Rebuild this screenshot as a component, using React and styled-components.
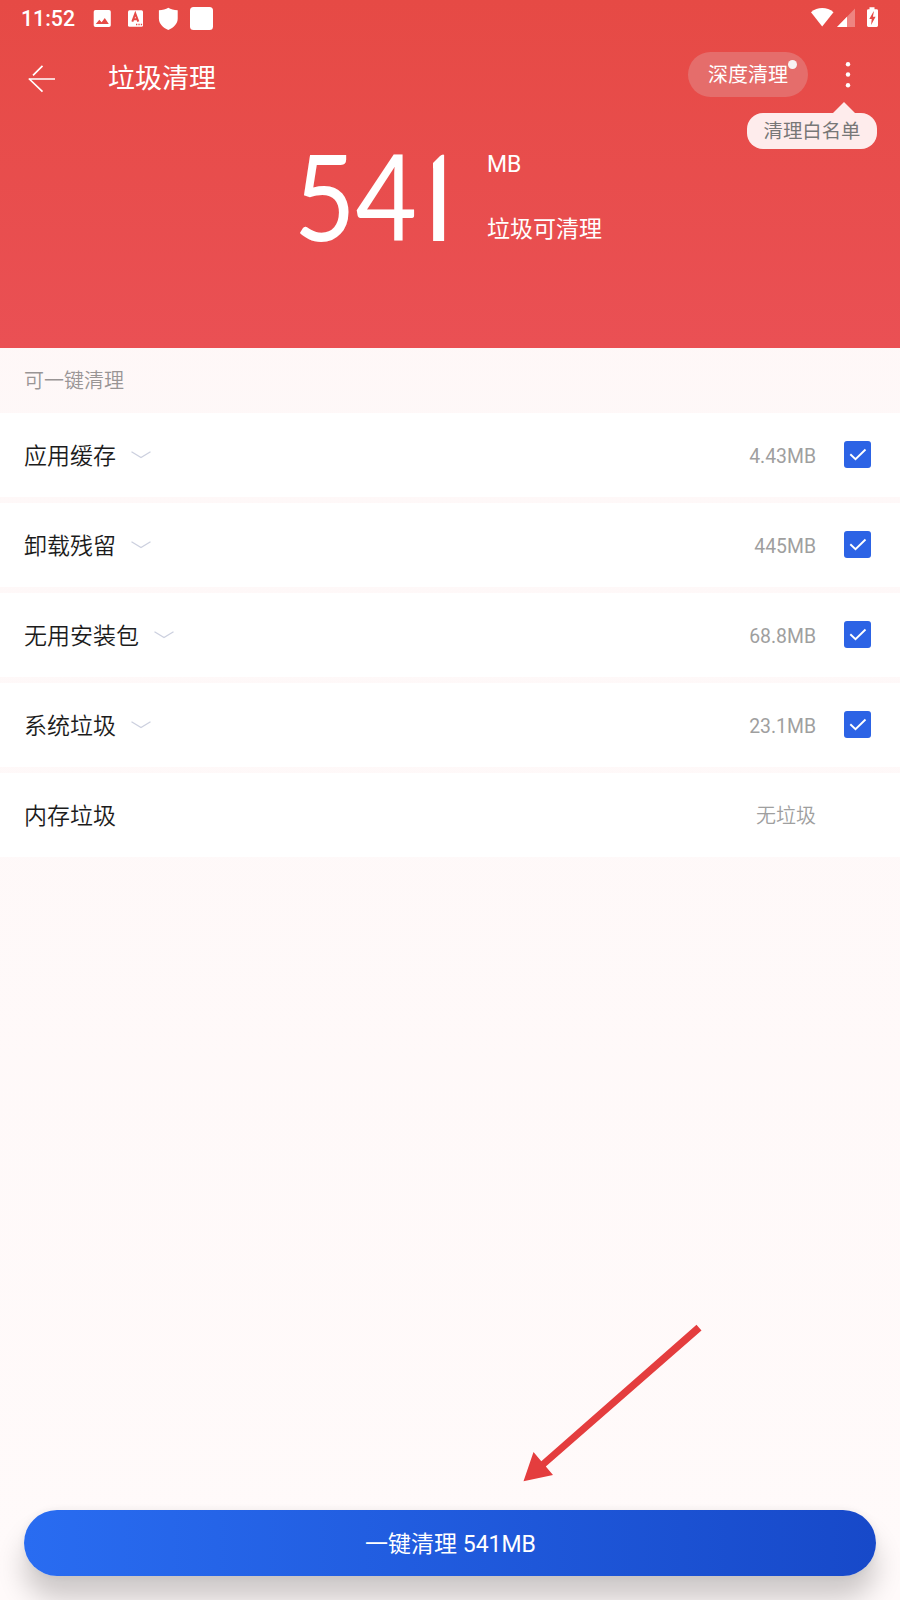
import React, { useState } from "react";
import styled, { createGlobalStyle } from "styled-components";

const groups = [
  { id: "cache", name: "应用缓存", size: "4.43MB" },
  { id: "residue", name: "卸载残留", size: "445MB" },
  { id: "apk", name: "无用安装包", size: "68.8MB" },
  { id: "system", name: "系统垃圾", size: "23.1MB" },
  { id: "memory", name: "内存垃圾", size: null },
];

const StatusBar = () => (
  <StatusRow>
    <Clock>11:52</Clock>
    <svg width="140" height="36" viewBox="0 0 140 36" fill="#fff">
      <path
        fillRule="evenodd"
        d="M3.500 10H17a1.800 1.800 0 0 1 1.800 1.800v13.400A1.800 1.800 0 0 1 17 27H3.500a1.800 1.800 0 0 1-1.800-1.800V11.800A1.800 1.800 0 0 1 3.500 10zM3.800 24h13l-4-6-3.200 4.200-2.300-2.400z"
      />
      <rect x="36" y="10.300" width="15" height="16.400" rx="1.500" />
      <path
        d="M40.300 21.700l3-8 3 8M41.300 19.300h4"
        fill="none"
        stroke="#e64a46"
        strokeWidth="2"
      />
      <path d="M44 24.500h6.500" stroke="#e64a46" strokeWidth="1.300" strokeDasharray="1.300 1.100" />
      <path d="M76.300 7.700c2.400 1.600 5.700 2.400 9.400 2.500v8.300c0 5.300-4 9.200-9.400 11.500-5.400-2.300-9.400-6.200-9.400-11.500v-8.300c3.700-.1 7-.9 9.400-2.500z" />
      <rect x="98" y="7" width="23" height="23" rx="3.500" />
    </svg>
    <Spacer />
    <svg width="72" height="36" viewBox="0 0 72 36" fill="#fff">
      <path d="M3 12.200C9.500 6.700 19 6.700 25.500 12.200L14.200 26.500z" />
      <path d="M47 8.500V27H29z" opacity="0.32" />
      <path d="M39 16.700V27H29z" />
      <path
        fillRule="evenodd"
        d="M61.500 7.200h5v2h2.100a1.400 1.400 0 0 1 1.400 1.400v15a1.400 1.400 0 0 1-1.400 1.400h-8.200a1.400 1.400 0 0 1-1.400-1.400v-15a1.400 1.400 0 0 1 1.400-1.400h1.100zM65.500 11.500l-4.200 7.500h2.400l-.6 6 4.500-8.200h-2.700l1-5.300z"
      />
    </svg>
  </StatusRow>
);

const Group = ({ name, size, checked, onToggle }) => (
  <Row>
    <RowName>{name}</RowName>
    {size && (
      <Chevron width="20" height="8" viewBox="0 0 20 8">
        <path d="M.5 .8 10 6.500l9.500-5.700" fill="none" stroke="#ccd0df" strokeWidth="1.300" />
      </Chevron>
    )}
    <Spacer />
    {size ? <RowSize>{size}</RowSize> : <RowEmpty>无垃圾</RowEmpty>}
    <CheckSlot>
      {size && (
        <Checkbox role="checkbox" aria-checked={checked} $checked={checked} onClick={onToggle}>
          {checked && (
            <svg width="27" height="27" viewBox="0 0 27 27">
              <path d="M6.300 13.300l5.200 5L21.500 8.500" fill="none" stroke="#fff" strokeWidth="1.900" />
            </svg>
          )}
        </Checkbox>
      )}
    </CheckSlot>
  </Row>
);

const App = () => {
  const [unchecked, setUnchecked] = useState([]);

  const toggle = (id) => {
    setUnchecked((list) => (list.includes(id) ? list.filter((i) => i !== id) : [...list, id]));
  };

  return (
    <Screen>
      <GlobalStyle />
      <Header>
        <StatusBar />
        <AppBar>
          <BackIcon width="28" height="28" viewBox="0 0 28 28">
            <path
              d="M14.500 .8 5 10.300M27 14H1.500M.8 13.500l13.700 13.200"
              fill="none"
              stroke="#fff"
              strokeWidth="1.700"
            />
          </BackIcon>
          <Title>垃圾清理</Title>
          <Spacer />
          <DeepClean>
            深度清理
            <Dot />
          </DeepClean>
          <MenuButton>
            <svg width="6" height="28" viewBox="0 0 6 28" fill="#fff">
              <circle cx="3" cy="3.200" r="2.200" />
              <circle cx="3" cy="13.500" r="2.200" />
              <circle cx="3" cy="24.200" r="2.200" />
            </svg>
            <Tip>清理白名单</Tip>
          </MenuButton>
        </AppBar>
        <Summary>
          <Total>
            <Digits>54</Digits>
            <One>1</One>
          </Total>
          <Units>
            <Unit>MB</Unit>
            <span>垃圾可清理</span>
          </Units>
        </Summary>
      </Header>
      <SectionTitle>可一键清理</SectionTitle>
      <List>
        {groups.map((g) => (
          <Group
            key={g.id}
            name={g.name}
            size={g.size}
            checked={!unchecked.includes(g.id)}
            onToggle={() => toggle(g.id)}
          />
        ))}
      </List>
      <Footer>
        <Pointer width="180" height="158" viewBox="0 0 180 158" fill="#e43d3e">
          <path d="M173.500 .8l5 5.800L22.800 142.500l7.200 8.600L.5 157.300l10-29.400 7.800 9.400z" />
        </Pointer>
        <CleanButton>一键清理 541MB</CleanButton>
      </Footer>
    </Screen>
  );
};

export default App;

const GlobalStyle = createGlobalStyle`
  body {
    margin: 0;
    background: #fff9f9;
  }
`;

const Screen = styled.div`
  width: 900px;
  height: 1600px;
  display: flex;
  flex-direction: column;
  overflow: hidden;
  background: linear-gradient(#fef7f7, #fffafa);
  font-family: Roboto, "Noto Sans CJK SC", sans-serif;
  color: #1c1c1c;
`;

const Spacer = styled.div`
  flex: 1;
`;

const Header = styled.header`
  height: 348px;
  flex-shrink: 0;
  background: linear-gradient(#e64a45, #ea5054);
  color: #fff;
`;

const StatusRow = styled.div`
  height: 36px;
  display: flex;
  align-items: center;
  padding: 0 20px 0 21px;
`;

const Clock = styled.span`
  width: 71px;
  padding-top: 1px;
  font-size: 21.300px;
  font-weight: 500;
  line-height: 36px;
`;

const AppBar = styled.div`
  height: 77px;
  display: flex;
  align-items: center;
  padding: 0 44px 0 28px;
`;

const BackIcon = styled.svg`
  margin-top: 8px;
`;

const Title = styled.h1`
  margin: 8px 0 0 52px;
  font-size: 27px;
  font-weight: 400;
  line-height: 40px;
`;

const DeepClean = styled.button`
  position: relative;
  width: 120px;
  height: 45px;
  border: 0;
  padding: 0 0 3px;
  border-radius: 23px;
  background: #e56d6b;
  color: #fff;
  font: inherit;
  font-size: 20px;
`;

const Dot = styled.i`
  position: absolute;
  top: 8px;
  right: 11px;
  width: 9px;
  height: 9px;
  border-radius: 50%;
  background: #f7f3f3;
`;

const MenuButton = styled.div`
  position: relative;
  width: 16px;
  margin-left: 32px;
  display: flex;
  justify-content: center;
`;

const Tip = styled.div`
  position: absolute;
  top: 52px;
  right: -21px;
  width: 130px;
  height: 36px;
  border-radius: 16px;
  background: #feecec;
  color: #777;
  font-size: 19.400px;
  line-height: 38px;
  text-align: center;

  &::before {
    content: "";
    position: absolute;
    top: -11px;
    right: 22px;
    border: 11px solid transparent;
    border-top: 0;
    border-bottom-color: #feecec;
  }
`;

const Summary = styled.div`
  display: flex;
  padding: 34px 0 0 294px;
`;

const Total = styled.div`
  display: flex;
  width: 193px;
  line-height: 104px;
`;

const Digits = styled.span`
  width: 107px;
  margin-top: -4px;
  font-family: Lato, sans-serif;
  font-size: 120px;
  transform: scaleX(0.885);
  transform-origin: left;
`;

/* trims the flag so the digit reads as a slanted bar */
const One = styled.span`
  margin-top: 1px;
  font-size: 121px;
  clip-path: polygon(32px 15px, 42px 5px, 50px 0, 50px 110px, 32px 110px);
`;

const Units = styled.div`
  display: flex;
  flex-direction: column;
  gap: 35px;
  font-size: 23px;
  line-height: 30px;
`;

const Unit = styled.span`
  padding-top: 3px;
`;

const SectionTitle = styled.h2`
  height: 65px;
  margin: 0;
  padding-left: 24px;
  font-size: 20px;
  font-weight: 350;
  line-height: 67px;
  color: #999595;
`;

const List = styled.div`
  display: flex;
  flex-direction: column;
  gap: 6px;
`;

const Row = styled.div`
  height: 84px;
  display: flex;
  align-items: center;
  padding: 0 29px 0 24px;
  background: #fff;
`;

const RowName = styled.span`
  padding-bottom: 2px;
  font-size: 23px;
  font-weight: 350;
`;

const Chevron = styled.svg`
  margin: 0 0 1px 15px;
`;

const RowSize = styled.span`
  padding-top: 3px;
  font-size: 19.400px;
  color: #9f9f9f;
`;

const RowEmpty = styled(RowSize)`
  padding: 0 0 2px;
  font-size: 20px;
  font-weight: 350;
`;

const CheckSlot = styled.div`
  width: 27px;
  margin-left: 28px;
`;

const Checkbox = styled.div`
  width: 27px;
  height: 27px;
  margin-top: -1px;
  border-radius: 3px;
  background: ${(props) => (props.$checked ? "#2c63e5" : "#dfe3ee")};

  svg {
    display: block;
  }
`;

const Footer = styled.footer`
  position: relative;
  margin-top: auto;
  padding: 0 24px 24px;
`;

const Pointer = styled.svg`
  position: absolute;
  left: 523px;
  bottom: 118px;
`;

const CleanButton = styled.button`
  display: block;
  width: 100%;
  height: 66px;
  border: 0;
  padding: 0 0 2px 1px;
  border-radius: 33px;
  background: linear-gradient(90deg, #296cf1, #1749c9);
  box-shadow: 0 23px 28px rgba(0, 0, 0, 0.2), 0 0 9px rgba(0, 0, 0, 0.06);
  color: #fff;
  font: inherit;
  font-size: 23px;
`;
